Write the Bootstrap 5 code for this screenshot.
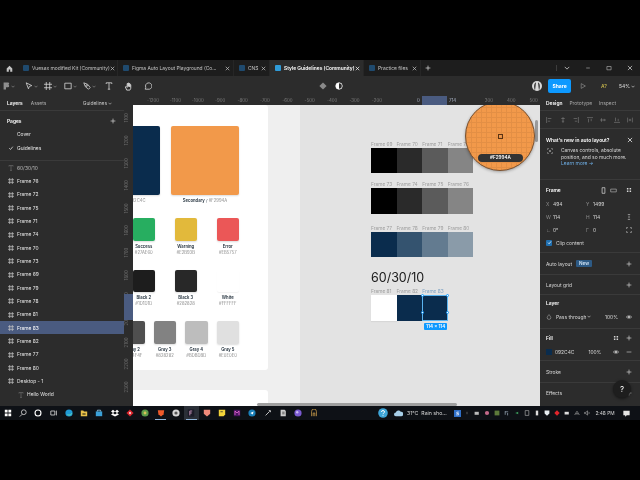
<!DOCTYPE html>
<html lang="en">
<head>
<meta charset="utf-8">
<title>Style Guidelines</title>
<link href="https://cdn.jsdelivr.net/npm/bootstrap@5.3.0/dist/css/bootstrap.min.css" rel="stylesheet">
<style>
html,body{margin:0;height:100%;background:#000}
body{width:640px;height:480px;overflow:hidden;font-family:Inter,"Liberation Sans",sans-serif;font-size:4.9px;line-height:6px;color:#e8e8e8}
svg{display:block;flex:none;fill:none;stroke:currentColor;stroke-width:1}
.app{width:640px;height:480px;padding:60px 0;filter:blur(.25px)}
.tabbar{height:16px;background:#1d1d1d}
.ftab{height:16px;color:#c4c4c4;border-right:1px solid #262626;white-space:nowrap;overflow:hidden}
.ftab.on{background:#2c2c2c;color:#fff;font-weight:600}
.ftab i{display:block;flex:none;width:6px;height:6px;background:#1f4a6e;margin:0 3px 0 5px;border-radius:1px}
.ftab.on i{background:#2f9bd8}
.ftab svg{width:5px;height:5px;margin-left:auto;margin-right:3px}
.ftab svg.homei{width:7px;height:7px;margin:0}
.w0{width:18px;border:0}.w1{width:100px}.w2{width:116px}.w3{width:36px}.w4{width:94px}.w5{width:57px}
.winbtn{width:21px;color:#bbb}
.winsep{border-left:1px solid #3d3d3d}
.toolbar{height:20px;background:#2c2c2c;color:#d8d8d8}
.tool{width:19.5px;height:20px}
.tool .cv{width:4px;height:3px;margin-left:1px;color:#999}
.tool-a{width:17.5px}
.i8{width:8px;height:8px}
.i9{width:9px;height:9px}
.avatar{width:10px;height:10px;margin-left:189px}
.share{width:23px;height:14px;padding:0;border:0;border-radius:2px;margin-left:6px;background:#0d99ff;font-size:5px;font-weight:700;color:#fff;line-height:14px}
.playi{margin-left:9px;color:#9a9a9a}
.mpl{margin-left:15px;color:#c2b24a;font-weight:600;width:7px}
.zoompc{margin-left:11px;margin-right:5px;color:#e0e0e0}
.tinycv{width:4px;height:3px;margin-left:1px}
.work{height:310px;background:#2c2c2c}
.leftp{width:124px;height:310px;overflow:hidden;background:#2c2c2c;flex:none}
.phead{height:15px;padding:0 7px;border-bottom:1px solid #3a3a3a;color:#b0b0b0}
.phead b{color:#fff;font-weight:600}
.pagesel{color:#c8c8c8;margin-right:5px}
.pages{padding-top:3.5px;height:50px;border-bottom:1px solid #3a3a3a}
.lrow{height:13.33px;padding-left:17px;position:relative;color:#e6e6e6;white-space:nowrap}
.lrow svg{position:absolute;left:8px;top:4px;width:6px;height:6px;color:#c4c4c4}
.lrow svg.dim{color:#777}
.lrow.sel{background:#4a5b80;color:#fff}
.lrow.muted{color:#b8b8b8}
.lrow.deep{padding-left:27px}
.lrow.deep svg{left:18px}
.pagehead{padding-left:7px;color:#fff;font-weight:600}
.lrow svg.pageplus{left:110px;top:3.5px;color:#ddd}
.stage{width:416px;height:310px}
.rulertop{height:9px;background:#2c2c2c;padding-left:17.8px;color:#7d7d7d;font-size:4.4px;line-height:9px;position:relative}
.rulertop span{display:block;flex:none;width:22.4px;text-align:center}
.hl{position:absolute;left:298px;top:0;width:25px;height:9px;background:#4a5b80}
.hl em{position:absolute;top:0;font-style:normal;color:#aab3c6}
.hl .a{left:-5px}.hl .b{left:27px}
.rulerleft{width:9px;flex:none;height:301px;background:#2c2c2c;color:#6a6a6a;font-size:4.4px;position:relative;padding-top:2px}
.rulerleft span{display:flex;height:22.4px;align-items:center;justify-content:center;writing-mode:vertical-rl;transform:rotate(180deg)}
.vhl{position:absolute;left:0;top:189px;width:9px;height:26px;background:#4a5b80}
.canvasx{width:407px;height:301px;background:#e3e3e3;overflow:hidden;position:relative;color:#1c2b3a}
.sheet{position:absolute;left:0;top:0;width:167px;height:301px;background:#efefef}
.guide{width:135px;height:265px;background:#fff;padding:21px 29px 0 0;display:flex;flex-direction:column;gap:14px;align-items:flex-end;border-radius:0 3px 3px 0}
.guide2{position:absolute;left:0;top:285px;width:135px;height:20px;background:#fff;border-radius:0 3px 0 0}
.srow{display:flex;justify-content:flex-end}
.g1{gap:11px}.g2{gap:19.5px}.g4{gap:9px}
.scol{display:flex;flex-direction:column;align-items:center;flex:none;font-size:4.2px;text-align:center;white-space:nowrap}
.scol b{font-weight:600;color:#22303c}
.scol small{font-size:4.2px;color:#8d8d8d}
.chip{display:block;border-radius:2px;margin-bottom:3px;box-shadow:0 1px 2px rgba(0,0,0,.14)}
.big{width:68px;height:69px}
.sm{width:22.5px;height:22.5px}
.c-navy{background:#0a2c4d}.c-or{background:#f2994a}.c-gr{background:#27ae60}.c-ye{background:#e2b93b}.c-re{background:#eb5757}
.c-b2{background:#1d1d1d}.c-b3{background:#282828}.c-wh{background:#fff;box-shadow:0 1px 1px rgba(0,0,0,.05)}
.c-g2{background:#4f4f4f}.c-g3{background:#828282}.c-g4{background:#bdbdbd}.c-g5{background:#e0e0e0}
.chart{position:absolute;left:238px;top:36px;width:102.4px}
.flab{display:flex;height:6px;color:#9d9d9d;font-size:4.8px;white-space:nowrap}
.flab span{display:block;width:25.6px;flex:none}
.flab span.picklab{color:#7fa3c4}
.strip{display:flex;height:25.4px;margin-top:1px}
.strip i{display:block;width:25.6px;flex:none}
.mt-a{margin-top:8px}
.mt-b{margin-top:11px}
.s0{background:#000}.s1{background:#2a2a2a}.s2{background:#5b5b5b}.s3{background:#858585}
.n1{background:#34536f}.n2{background:#637b90}.n3{background:#8a9ba9}
.ctitle{font-size:12.5px;line-height:14px;color:#1a1a1a;margin-top:14px;margin-bottom:3px}
.picked{position:relative}
.selbox{position:absolute;left:51.2px;top:7px;width:25.6px;height:25.4px;border:1px solid #5ab4f0}
.hd{position:absolute;width:3px;height:3px;background:#fff;border:.5px solid #0d99ff;border-radius:50%}
.h1{left:-2px;top:-2px}.h2{right:-2px;top:-2px}.h3{left:-2px;bottom:-2px}.h4{right:-2px;bottom:-2px}
.sizetag{position:absolute;left:1px;bottom:-10px;width:23px;height:7px;background:#0d99ff;color:#fff;font-size:4.6px;line-height:7px;text-align:center;border-radius:1px;font-weight:600}
.loupe{position:absolute;left:332px;top:-4px;width:70px;height:70px;border:1px solid #7a5231;background-color:#f2994a;background-image:linear-gradient(#e38f45 1px,transparent 1px),linear-gradient(90deg,#e38f45 1px,transparent 1px);background-size:5px 5px;box-shadow:0 1px 3px rgba(0,0,0,.3)}
.loupe i{position:absolute;left:32px;top:32px;width:5px;height:5px;border:1px solid #5b3312}
.pill{position:absolute;left:12px;top:52px;width:45px;height:8px;background:#333;color:#fff;font-size:4.6px;line-height:8px;text-align:center;border-radius:4px;font-weight:600}
.vbar{position:absolute;left:402px;top:15px;width:3px;height:22px;background:#9a9a9a;border-radius:2px}
.hbar{position:absolute;left:124px;top:298px;width:200px;height:3px;background:#9f9f9f;border-radius:2px}
.rightp{width:100px;height:310px;overflow:hidden;background:#2c2c2c;position:relative;flex:none}
.sect{border-bottom:1px solid #3a3a3a;padding:0 8px 0 6px;color:#d8d8d8}
.sect b{font-weight:600;color:#fff}
.h15{height:15px}.h18{height:18px}.h51{height:51px;padding-top:8px}.h73{height:73px;padding-top:3px}.h22{height:22px}.h20{height:20px}.h34{height:34px;padding-top:1px}.h32{height:32px;padding-top:2px}
.ptab{margin-right:7px;color:#a9a9a9}
.ptab.on{color:#fff;font-weight:600}
.aligns{color:#7f7f7f;justify-content:space-between;padding:0 7px 0 6px}
.aligns svg{width:6px;height:6px}
.rr{height:13px;display:flex;align-items:center}
.rh{height:14px;display:flex;align-items:center;justify-content:space-between}
.cell{display:flex;width:40px;flex:none}
.cell u{display:block;width:7px;text-decoration:none;color:#8d8d8d}
.xbtn{width:6px;height:6px;color:#ddd;margin-right:-1px}
.newbody{margin-top:4px}
.newic{width:6px;height:6px;margin:1px 8px 0 1px;color:#bbb}
.newtxt{line-height:6.7px;white-space:nowrap}
.learn{color:#6fb0e8}
.ori1{width:7px;height:7px;margin-right:3px;color:#ddd}
.ori2{width:7px;height:7px;margin-right:9.5px;color:#aaa}
.chk{display:flex;width:6px;height:6px;background:#1f6fb0;border-radius:1px;margin-right:4px;color:#fff;align-items:center;justify-content:center}
.chk svg{width:5px;height:5px}
.new{padding:1px 3px;background:#2d5a85;color:#cfe3f5;font-size:4.6px;font-weight:600;border-radius:1px;line-height:5px;margin-left:4px}
.ic6{width:6px;height:6px}
.mla{margin-left:auto}
.dropi{width:6px;height:6px;margin-right:4px;color:#aaa}
.pct1{margin-left:auto;margin-right:8px}
.pct2{margin-left:14px}
.eye2{width:6px;height:6px;margin-left:12px}
.dots2{width:6px;height:6px;margin-right:7px}
.fillchip{display:block;width:6px;height:6px;background:#0a2c4d;margin-right:3px;flex:none}
.lastsect{height:22px;border:0;padding-bottom:3px}
.helpb{position:absolute;left:73px;top:284px;width:18px;height:18px;background:#1e1e1e;color:#fff;font-size:8px;line-height:18px;text-align:center;box-shadow:0 1px 3px rgba(0,0,0,.5)}
.taskbar{height:14px;background:#0e1116;color:#ddd}
.tk{width:15.3px;height:14px;flex:none;position:relative}
.tk svg{width:8px;height:8px}
.tk.act{background:#2a2f37}
.tk.run::after{content:"";position:absolute;left:2px;right:2px;bottom:0;height:1px;background:#8fb4d8}
.tray{width:10px;height:14px;flex:none}
.tray svg{width:6px;height:6px}
.tray.t-help{width:18px}
.tray.t-help svg{width:10px;height:10px}
.tray.t-cloud{width:12px}
.tray.t-cloud svg{width:9px;height:9px}
.tray.t-s svg{width:7px;height:7px}
.traytxt{width:48px;white-space:nowrap;font-size:5.2px;color:#d9d9d9;padding-left:3px}
.clock{width:22px;margin-left:2px;text-align:center;font-size:4.8px;color:#d9d9d9;white-space:nowrap}
.notif{width:20px;margin-right:4px}
.notif svg{width:7px;height:7px}
</style>
</head>
<body>
<svg width="0" height="0" class="position-absolute">
<symbol id="x" viewBox="0 0 10 10"><path d="M1.5 1.500l7 7M8.500 1.500l-7 7" stroke-width="1.400"/></symbol>
<symbol id="cv" viewBox="0 0 8 6"><path d="M1 1.500l3 3 3-3" stroke-width="1.200"/></symbol>
<symbol id="hash" viewBox="0 0 6 6"><path d="M1.700 0v6M4.300 0v6M0 1.700h6M0 4.300h6" stroke-width=".7"/></symbol>
<symbol id="plus" viewBox="0 0 10 10"><path d="M5 1v8M1 5h8" stroke-width="1.100"/></symbol>
<symbol id="t" viewBox="0 0 10 10"><path d="M1.500 2.500V1h7v1.500M5 1v8M3.500 9h3"/></symbol>
<symbol id="eye" viewBox="0 0 10 10"><path d="M.5 5C2 2.500 8 2.500 9.500 5 8 7.500 2 7.500.5 5z"/><circle cx="5" cy="5" r="1.300" fill="currentColor"/></symbol>
<symbol id="dots" viewBox="0 0 10 10"><path d="M1.500 1.500h2.500v2.500h-2.500zM6 1.500h2.500v2.500H6zM1.500 6h2.500v2.500H1.500zM6 6h2.500v2.500H6z" fill="currentColor" stroke="none"/></symbol>
<symbol id="check" viewBox="0 0 10 10"><path d="M2 5.300l2.200 2.200L8 2.800" stroke-width="1.500"/></symbol>
</svg>
<div class="app">

<div class="tabbar d-flex align-items-center">
  <div class="ftab w0 d-flex align-items-center justify-content-center"><svg class="homei" viewBox="0 0 10 10"><path d="M5 1L1 5v4.500h3V6.500h2v3h3V5z" fill="currentColor" stroke="none"/></svg></div>
  <div class="ftab w1 d-flex align-items-center"><i></i>Vuesax modified Kit (Community)<svg><use href="#x"/></svg></div>
  <div class="ftab w2 d-flex align-items-center"><i></i>Figma Auto Layout Playground (Co...<svg><use href="#x"/></svg></div>
  <div class="ftab w3 d-flex align-items-center"><i></i>CNS<svg><use href="#x"/></svg></div>
  <div class="ftab w4 on d-flex align-items-center"><i></i>Style Guidelines (Community)<svg><use href="#x"/></svg></div>
  <div class="ftab w5 d-flex align-items-center"><i></i>Practice files<svg><use href="#x"/></svg></div>
  <div class="d-flex align-items-center ms-1"><svg class="ic6"><use href="#plus"/></svg></div>
  <div class="d-flex align-items-center mla">
    <div class="winbtn winsep d-flex justify-content-center"><svg class="ic6" viewBox="0 0 8 6"><use href="#cv"/></svg></div>
    <div class="winbtn d-flex justify-content-center"><svg class="ic6" viewBox="0 0 10 10"><path d="M2 5h6"/></svg></div>
    <div class="winbtn d-flex justify-content-center"><svg class="ic6" viewBox="0 0 10 10"><path d="M1.500 2.500h7v5.500h-7z"/></svg></div>
    <div class="winbtn d-flex justify-content-center"><svg class="ic6"><use href="#x"/></svg></div>
  </div>
</div>

<div class="toolbar d-flex align-items-center">
  <div class="d-flex align-items-center tool-a tool justify-content-center"><svg class="i8" viewBox="0 0 10 10"><path d="M2 .500h3v3H2zM2 3.500h3v3H2zM2 6.500h3v3H2zM5 .500h2.500a1.500 1.500 0 010 3H5zM5 3.500h2.500a1.500 1.500 0 010 3H5z" fill="#8f8f8f" stroke="none"/></svg><svg class="cv"><use href="#cv"/></svg></div>
  <div class="d-flex align-items-center tool ms-1 justify-content-center"><svg class="i8" viewBox="0 0 10 10"><path d="M1.500 1l7 3.500-3 1-1.200 3z"/></svg><svg class="cv"><use href="#cv"/></svg></div>
  <div class="d-flex align-items-center tool justify-content-center"><svg class="i8" viewBox="0 0 6 6"><path d="M1.700 0v6M4.300 0v6M0 1.700h6M0 4.300h6" stroke-width=".6"/></svg><svg class="cv"><use href="#cv"/></svg></div>
  <div class="d-flex align-items-center tool justify-content-center"><svg class="i8" viewBox="0 0 10 10"><path d="M1 1.500h8v7H1z"/></svg><svg class="cv"><use href="#cv"/></svg></div>
  <div class="d-flex align-items-center tool justify-content-center"><svg class="i8" viewBox="0 0 10 10"><path d="M1 1l2 5 4 3 2-2-3-4z"/><circle cx="4.500" cy="4.500" r="1"/></svg><svg class="cv"><use href="#cv"/></svg></div>
  <div class="d-flex align-items-center tool justify-content-center"><svg class="i8"><use href="#t"/></svg></div>
  <div class="d-flex align-items-center tool justify-content-center"><svg class="i9" viewBox="0 0 10 10"><path d="M3 9L1.500 5.500l1-.5L3.500 6V1.800h1V5V1.200h1V5V1.800h1V5.500V3h1v4l-1 2z" fill="#2c2c2c"/></svg></div>
  <div class="d-flex align-items-center tool justify-content-center"><svg class="i8" viewBox="0 0 10 10"><path d="M1.500 9l.7-2.300A4 4 0 115 9z"/></svg></div>
  <div class="d-flex align-items-center mla">
    <svg class="i8 me-2" viewBox="0 0 10 10"><path d="M5 .5L9.500 5 5 9.500.5 5z" fill="#8a8a8a" stroke="none"/></svg>
    <svg class="i8" viewBox="0 0 10 10"><circle cx="5" cy="5" r="4" fill="#fff" stroke="#fff"/><path d="M5 1.500a3.500 3.500 0 010 7z" fill="#2c2c2c" stroke="none"/></svg>
    <svg class="avatar" viewBox="0 0 10 10"><circle cx="5" cy="5" r="5" fill="#d9d9d9" stroke="none"/><path d="M3 9.500C1.500 6 2 2 4 1.500L3.500 6zM7 9.500C8.500 6 8 2 6 1.500L6.500 6z" fill="#333" stroke="none"/></svg>
    <button type="button" class="btn share">Share</button>
    <svg class="ic6 playi" viewBox="0 0 10 10"><path d="M2 1l7 4-7 4z"/></svg>
    <span class="mpl">A?</span>
    <span class="d-flex align-items-center zoompc">54%<svg class="tinycv"><use href="#cv"/></svg></span>
  </div>
</div>

<div class="work d-flex">
  <aside class="leftp">
    <div class="phead d-flex align-items-center"><b>Layers</b><span class="ms-2">Assets</span><span class="mla d-flex align-items-center pagesel">Guidelines<svg class="tinycv"><use href="#cv"/></svg></span></div>
    <div class="pages">
      <div class="lrow pagehead d-flex align-items-center">Pages<svg class="pageplus"><use href="#plus"/></svg></div>
      <div class="lrow d-flex align-items-center">Cover</div>
      <div class="lrow d-flex align-items-center"><svg><use href="#check"/></svg>Guidelines</div>
    </div>
    <div class="lrow muted d-flex align-items-center"><svg class="dim"><use href="#t"/></svg>60/30/10</div>
    <div class="lrow d-flex align-items-center"><svg><use href="#hash"/></svg>Frame 76</div>
    <div class="lrow d-flex align-items-center"><svg><use href="#hash"/></svg>Frame 72</div>
    <div class="lrow d-flex align-items-center"><svg><use href="#hash"/></svg>Frame 75</div>
    <div class="lrow d-flex align-items-center"><svg><use href="#hash"/></svg>Frame 71</div>
    <div class="lrow d-flex align-items-center"><svg><use href="#hash"/></svg>Frame 74</div>
    <div class="lrow d-flex align-items-center"><svg><use href="#hash"/></svg>Frame 70</div>
    <div class="lrow d-flex align-items-center"><svg><use href="#hash"/></svg>Frame 73</div>
    <div class="lrow d-flex align-items-center"><svg><use href="#hash"/></svg>Frame 69</div>
    <div class="lrow d-flex align-items-center"><svg><use href="#hash"/></svg>Frame 79</div>
    <div class="lrow d-flex align-items-center"><svg><use href="#hash"/></svg>Frame 78</div>
    <div class="lrow d-flex align-items-center"><svg><use href="#hash"/></svg>Frame 81</div>
    <div class="lrow sel d-flex align-items-center"><svg><use href="#hash"/></svg>Frame 83</div>
    <div class="lrow d-flex align-items-center"><svg><use href="#hash"/></svg>Frame 82</div>
    <div class="lrow d-flex align-items-center"><svg><use href="#hash"/></svg>Frame 77</div>
    <div class="lrow d-flex align-items-center"><svg><use href="#hash"/></svg>Frame 80</div>
    <div class="lrow d-flex align-items-center"><svg><use href="#hash"/></svg>Desktop - 1</div>
    <div class="lrow deep d-flex align-items-center"><svg class="dim"><use href="#t"/></svg>Hello World</div>
  </aside>

  <main class="stage">
    <div class="rulertop d-flex">
      <span>-1200</span><span>-1100</span><span>-1000</span><span>-900</span><span>-800</span><span>-700</span><span>-600</span><span>-500</span><span>-400</span><span>-300</span><span>-200</span><span></span><span></span><span></span><span></span><span>300</span><span>400</span><span>500</span>
      <div class="hl"><em class="a">0</em><em class="b">714</em></div>
    </div>
    <div class="d-flex">
      <div class="rulerleft">
        <span>1100</span><span>1200</span><span>1300</span><span>1400</span><span>1500</span><span>1600</span><span>1700</span><span>1800</span><span>1900</span><span>2000</span><span>2100</span><span>2200</span><span>2300</span>
        <div class="vhl"></div>
      </div>
      <div class="canvasx">
        <div class="sheet">
          <div class="guide">
            <div class="srow g1">
              <div class="scol"><span class="chip big c-navy"></span><span><b>Primary</b> / <small>#092C4C</small></span></div>
              <div class="scol"><span class="chip big c-or"></span><span><b>Secondary</b> / <small>#F2994A</small></span></div>
            </div>
            <div class="srow g2">
              <div class="scol"><span class="chip sm c-gr"></span><b>Success</b><small>#27AE60</small></div>
              <div class="scol"><span class="chip sm c-ye"></span><b>Warning</b><small>#E2B93B</small></div>
              <div class="scol"><span class="chip sm c-re"></span><b>Error</b><small>#EB5757</small></div>
            </div>
            <div class="srow g2">
              <div class="scol"><span class="chip sm c-b2"></span><b>Black 2</b><small>#1D1D1D</small></div>
              <div class="scol"><span class="chip sm c-b3"></span><b>Black 3</b><small>#282828</small></div>
              <div class="scol"><span class="chip sm c-wh"></span><b>White</b><small>#FFFFFF</small></div>
            </div>
            <div class="srow g4">
              <div class="scol"><span class="chip sm c-g2"></span><b>Gray 2</b><small>#4F4F4F</small></div>
              <div class="scol"><span class="chip sm c-g3"></span><b>Gray 3</b><small>#828282</small></div>
              <div class="scol"><span class="chip sm c-g4"></span><b>Gray 4</b><small>#BDBDBD</small></div>
              <div class="scol"><span class="chip sm c-g5"></span><b>Gray 5</b><small>#E0E0E0</small></div>
            </div>
          </div>
          <div class="guide2"></div>
        </div>

        <div class="chart">
          <div class="flab"><span>Frame 69</span><span>Frame 70</span><span>Frame 71</span><span>Frame 72</span></div>
          <div class="strip"><i class="s0"></i><i class="s1"></i><i class="s2"></i><i class="s3"></i></div>
          <div class="flab mt-a"><span>Frame 73</span><span>Frame 74</span><span>Frame 75</span><span>Frame 76</span></div>
          <div class="strip"><i class="s0"></i><i class="s1"></i><i class="s2"></i><i class="s3"></i></div>
          <div class="flab mt-b"><span>Frame 77</span><span>Frame 78</span><span>Frame 79</span><span>Frame 80</span></div>
          <div class="strip"><i class="c-navy"></i><i class="n1"></i><i class="n2"></i><i class="n3"></i></div>
          <div class="ctitle">60/30/10</div>
          <div class="picked">
            <div class="flab"><span>Frame 81</span><span>Frame 82</span><span class="picklab">Frame 83</span></div>
            <div class="strip"><i class="c-wh"></i><i class="c-navy"></i><i class="c-navy"></i></div>
            <div class="selbox"><i class="hd h1"></i><i class="hd h2"></i><i class="hd h3"></i><i class="hd h4"></i><div class="sizetag">114 × 114</div></div>
          </div>
        </div>

        <div class="vbar"></div>
        <div class="hbar"></div>
        <div class="loupe rounded-circle"><i></i><div class="pill">#F2994A</div></div>
      </div>
    </div>
  </main>

  <aside class="rightp">
    <div class="sect h15 d-flex align-items-center"><span class="ptab on">Design</span><span class="ptab">Prototype</span><span class="ptab">Inspect</span></div>
    <div class="sect h18 d-flex align-items-center aligns">
      <svg viewBox="0 0 10 10"><path d="M1 0v10M3 2.500h6M3 7h4"/></svg>
      <svg viewBox="0 0 10 10"><path d="M5 0v10M2 2.500h6M3 7h4"/></svg>
      <svg viewBox="0 0 10 10"><path d="M9 0v10M1 2.500h6M3 7h4"/></svg>
      <svg viewBox="0 0 10 10"><path d="M0 1h10M2.500 3v6M7 3v4"/></svg>
      <svg viewBox="0 0 10 10"><path d="M0 5h10M2.500 2v6M7 3v4"/></svg>
      <svg viewBox="0 0 10 10"><path d="M0 9h10M2.500 1v6M7 3v4"/></svg>
      <svg viewBox="0 0 10 10"><path d="M1 1v8M9 1v8M5 3v4M3 5h4"/></svg>
    </div>
    <div class="sect h51">
      <div class="d-flex justify-content-between align-items-center"><b>What's new in auto layout?</b><svg class="xbtn"><use href="#x"/></svg></div>
      <div class="d-flex newbody">
        <svg class="newic" viewBox="0 0 10 10"><path d="M1 3V1h2M7 1h2v2M9 7v2H7M3 9H1V7"/><circle cx="5" cy="5" r="1" fill="currentColor"/></svg>
        <div class="newtxt">Canvas controls, absolute<br>position, and so much more.<br><span class="learn">Learn more →</span></div>
      </div>
    </div>
    <div class="sect h73">
      <div class="rh"><b>Frame</b><span class="d-flex align-items-center"><svg class="ori1" viewBox="0 0 10 10"><path d="M3 1h4v8H3z"/></svg><svg class="ori2" viewBox="0 0 10 10"><path d="M1 3h8v4H1z"/></svg><svg class="ic6"><use href="#dots"/></svg></span></div>
      <div class="rr"><div class="cell"><u>X</u>494</div><div class="cell"><u>Y</u>1499</div></div>
      <div class="rr"><div class="cell"><u>W</u>114</div><div class="cell"><u>H</u>114</div><svg class="mla ic6" viewBox="0 0 10 10"><path d="M3 1h4M3 9h4M5 3v4"/></svg></div>
      <div class="rr"><div class="cell"><u>∟</u>0°</div><div class="cell"><u>Γ</u>0</div><svg class="mla ic6" viewBox="0 0 10 10"><path d="M1 3V1h2M7 1h2v2M9 7v2H7M3 9H1V7"/></svg></div>
      <div class="rr"><span class="chk"><svg><use href="#check"/></svg></span>Clip content</div>
    </div>
    <div class="sect h22 d-flex align-items-center">Auto layout<span class="new">New</span><svg class="mla ic6"><use href="#plus"/></svg></div>
    <div class="sect h20 d-flex align-items-center">Layout grid<svg class="mla ic6"><use href="#plus"/></svg></div>
    <div class="sect h34">
      <div class="rh"><b>Layer</b></div>
      <div class="rr"><svg class="dropi" viewBox="0 0 10 10"><path d="M5 1c2 2.500 3 4 3 5a3 3 0 01-6 0c0-1 1-2.500 3-5z"/></svg>Pass through<svg class="tinycv"><use href="#cv"/></svg><span class="pct1">100%</span><svg class="ic6"><use href="#eye"/></svg></div>
    </div>
    <div class="sect h32">
      <div class="rh"><b>Fill</b><span class="d-flex align-items-center"><svg class="dots2"><use href="#dots"/></svg><svg class="ic6"><use href="#plus"/></svg></span></div>
      <div class="rr"><span class="fillchip"></span>092C4C<span class="pct2">100%</span><svg class="eye2"><use href="#eye"/></svg><svg class="mla ic6" viewBox="0 0 10 10"><path d="M1 5h8"/></svg></div>
    </div>
    <div class="sect h22 d-flex align-items-center">Stroke<svg class="mla ic6"><use href="#plus"/></svg></div>
    <div class="sect lastsect d-flex align-items-center">Effects<svg class="mla ic6"><use href="#plus"/></svg></div>
    <div class="helpb rounded-circle">?</div>
  </aside>
</div>

<div class="taskbar d-flex align-items-center">
  <div class="tk d-flex align-items-center justify-content-center"><svg viewBox="0 0 10 10"><path d="M1 1h3.500v3.500H1zM5.500 1H9v3.500H5.500zM1 5.500h3.500V9H1zM5.500 5.500H9V9H5.500z" fill="#fff" stroke="none"/></svg></div>
  <div class="tk d-flex align-items-center justify-content-center"><svg viewBox="0 0 10 10"><circle cx="6" cy="4" r="3"/><path d="M4 6.500L1 9.500"/></svg></div>
  <div class="tk d-flex align-items-center justify-content-center"><svg viewBox="0 0 10 10"><circle cx="5" cy="5" r="3.700" stroke-width="1.400" stroke="#fff"/></svg></div>
  <div class="tk d-flex align-items-center justify-content-center"><svg viewBox="0 0 10 10"><path d="M1 2.500h5v5H1zM8 2v6"/></svg></div>
  <div class="tk d-flex align-items-center justify-content-center"><svg viewBox="0 0 10 10"><circle cx="5" cy="5" r="4.500" fill="#1f9ad6" stroke="none"/><path d="M3 7c3 1.500 6 0 5-2" stroke="#6fe0a8"/></svg></div>
  <div class="tk d-flex align-items-center justify-content-center"><svg viewBox="0 0 10 10"><path d="M1 2h3l1 1h4v6H1z" fill="#e8c14a" stroke="none"/><path d="M3 5h4v2.500H3z" fill="#7d6a2a" stroke="none"/></svg></div>
  <div class="tk d-flex align-items-center justify-content-center"><svg viewBox="0 0 10 10"><path d="M1 3h8v6H1z" fill="#3aa0d8" stroke="none"/><path d="M3 3V1.500h4V3" stroke="#9fd6f2"/></svg></div>
  <div class="tk d-flex align-items-center justify-content-center"><svg viewBox="0 0 10 10"><path d="M2.500 1L5 3 2.500 5 0 3zM7.500 1L10 3 7.500 5 5 3zM2.500 5L5 7l2.500-2L10 7l-5 2.500L0 7z" fill="#fff" stroke="none"/></svg></div>
  <div class="tk d-flex align-items-center justify-content-center"><svg viewBox="0 0 10 10"><path d="M5 .500L9.500 5 5 9.500.5 5z" fill="#d8232a" stroke="none"/><circle cx="5" cy="5" r="1.500" fill="#f4c2c2" stroke="none"/></svg></div>
  <div class="tk d-flex align-items-center justify-content-center"><svg viewBox="0 0 10 10"><circle cx="5" cy="5" r="4.500" fill="#5b9a4a" stroke="none"/><circle cx="5" cy="5" r="1.800" fill="#d8c25a" stroke="none"/></svg></div>
  <div class="tk run d-flex align-items-center justify-content-center"><svg viewBox="0 0 10 10"><path d="M1 1.500h8l-.8 5L5 9.500 1.800 6.500z" fill="#ef5a2a" stroke="none"/></svg></div>
  <div class="tk d-flex align-items-center justify-content-center"><svg viewBox="0 0 10 10"><circle cx="5" cy="5" r="4.500" fill="#d5d5d5" stroke="none"/><circle cx="5" cy="5" r="2" fill="#555" stroke="none"/></svg></div>
  <div class="tk act run d-flex align-items-center justify-content-center"><svg viewBox="0 0 10 10"><path d="M1 .500h8v9H1z" fill="#1c1c28" stroke="none"/><path d="M3.500 8V2.500h3M3.500 5h2.500" stroke="#d8a0c8"/></svg></div>
  <div class="tk d-flex align-items-center justify-content-center"><svg viewBox="0 0 10 10"><path d="M1 1h8v5L5 9.500 1 6z" fill="#f08a7a" stroke="none"/></svg></div>
  <div class="tk d-flex align-items-center justify-content-center"><svg viewBox="0 0 10 10"><path d="M1 1h8v6L7 9H1z" fill="#f2d43a" stroke="none"/><path d="M3 3h3v1H3z" fill="#333" stroke="none"/></svg></div>
  <div class="tk d-flex align-items-center justify-content-center"><svg viewBox="0 0 10 10"><path d="M1 1h8v8H1z" fill="#4a1560" stroke="none"/><path d="M2.500 7.500v-5L5 5l2.500-2.500v5" stroke="#e86ad8"/></svg></div>
  <div class="tk d-flex align-items-center justify-content-center"><svg viewBox="0 0 10 10"><circle cx="5" cy="5" r="4.500" fill="#1a7fb8" stroke="none"/><path d="M3 5l4-2-1 4z" fill="#fff" stroke="none"/></svg></div>
  <div class="tk d-flex align-items-center justify-content-center"><svg viewBox="0 0 10 10"><path d="M2 8l5-5M6 2h2v2" stroke="#eee"/></svg></div>
  <div class="tk d-flex align-items-center justify-content-center"><svg viewBox="0 0 10 10"><path d="M2 1h5l1.500 1.500V9H2z" fill="#ccc" stroke="none"/><path d="M4 4h3M4 6h3" stroke="#444"/></svg></div>
  <div class="tk d-flex align-items-center justify-content-center"><svg viewBox="0 0 10 10"><circle cx="5" cy="5" r="4.500" fill="#7a5ad0" stroke="none"/><circle cx="4" cy="4" r="1.500" fill="#c8b8f0" stroke="none"/></svg></div>
  <div class="tk d-flex align-items-center justify-content-center"><svg viewBox="0 0 10 10"><path d="M2 9V3a3 3 0 016 0v6M4 9V5h2v4" stroke="#c89a4a"/></svg></div>
  <div class="d-flex align-items-center mla">
    <div class="tray t-help d-flex align-items-center justify-content-center"><svg viewBox="0 0 10 10"><circle cx="5" cy="5" r="4.800" fill="#3ea6d8" stroke="none"/><path d="M3.500 4a1.500 1.500 0 113 0c0 1-1.500 1-1.500 2.200M5 7.300v.8" stroke="#fff"/></svg></div>
    <div class="tray t-cloud d-flex align-items-center justify-content-center"><svg viewBox="0 0 10 10"><path d="M2 8a2 2 0 010-4 3 3 0 015.500-1A2.500 2.500 0 018 8z" fill="#a8cfe8" stroke="none"/></svg></div>
    <div class="traytxt">31°C &nbsp;Rain sho...</div>
    <div class="tray t-s d-flex align-items-center justify-content-center"><svg viewBox="0 0 10 10"><path d="M0 0h10v10H0z" fill="#2f6fc8" stroke="none"/><path d="M7 3H4v2h2.500v2H3" stroke="#fff"/></svg></div>
    <div class="tray d-flex align-items-center justify-content-center"><svg viewBox="0 0 10 10"><path d="M5 3v4" stroke="#888"/></svg></div>
    <div class="tray d-flex align-items-center justify-content-center"><svg viewBox="0 0 10 10"><path d="M1 3h7v5H1z" fill="#bbb" stroke="none"/></svg></div>
    <div class="tray d-flex align-items-center justify-content-center"><svg viewBox="0 0 10 10"><circle cx="5" cy="5" r="3.500" fill="#c46a8a" stroke="none"/></svg></div>
    <div class="tray d-flex align-items-center justify-content-center"><svg viewBox="0 0 10 10"><path d="M1 1h8v8H1z" fill="#5d7a3a" stroke="none"/></svg></div>
    <div class="tray d-flex align-items-center justify-content-center"><svg viewBox="0 0 10 10"><path d="M2 2v6M2 3h5M6 5v4" stroke="#bcd"/></svg></div>
    <div class="tray d-flex align-items-center justify-content-center"><svg viewBox="0 0 10 10"><path d="M2 5l5-2v4z" fill="#3a9a5a" stroke="none"/></svg></div>
    <div class="tray d-flex align-items-center justify-content-center"><svg viewBox="0 0 10 10"><path d="M2 1h6v8H2z" stroke="#bbb"/></svg></div>
    <div class="tray d-flex align-items-center justify-content-center"><svg viewBox="0 0 10 10"><path d="M3 1h4v8H3z" fill="#ddd" stroke="none"/></svg></div>
    <div class="tray d-flex align-items-center justify-content-center"><svg viewBox="0 0 10 10"><path d="M1 1h8v5L5 9.500 1 6z" fill="#e8eef2" stroke="none"/></svg></div>
    <div class="tray d-flex align-items-center justify-content-center"><svg viewBox="0 0 10 10"><path d="M5 .500L9.500 5 5 9.500.5 5z" fill="#e0252c" stroke="none"/></svg></div>
    <div class="tray d-flex align-items-center justify-content-center"><svg viewBox="0 0 10 10"><path d="M1 3h7v4.500H1z" fill="#ddd" stroke="none"/></svg></div>
    <div class="tray d-flex align-items-center justify-content-center"><svg viewBox="0 0 10 10"><path d="M1 8L5 2l4 6M3 8l2-3 2 3" stroke="#aaa"/></svg></div>
    <div class="tray d-flex align-items-center justify-content-center"><svg viewBox="0 0 10 10"><path d="M1 4h2l3-2.500v7L3 6H1zM8 3.500c1 1 1 2 0 3" stroke="#bbb"/></svg></div>
    <div class="clock">2:48 PM</div>
    <div class="tray notif d-flex align-items-center justify-content-center"><svg viewBox="0 0 10 10"><path d="M.5 1h9v6.500h-4L3 9.500v-2H.5z" fill="#e4e4e4" stroke="none"/></svg></div>
  </div>
</div>

</div>
</body>
</html>
